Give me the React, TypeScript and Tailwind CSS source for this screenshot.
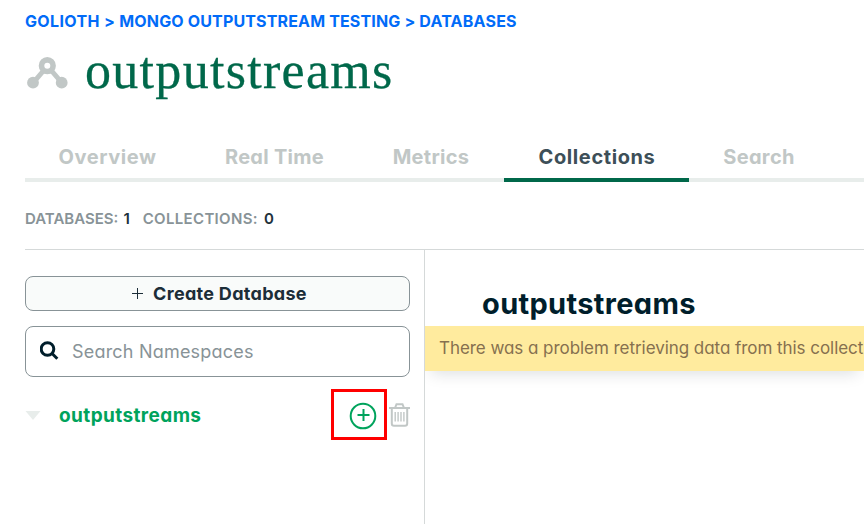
const tabs = [
  { label: "Overview", box: "w-[165px] text-[#c1c7c6]", text: "tracking-[0.55px]" },
  { label: "Real Time", box: "w-[168px] pl-px text-[#c1c7c6]", text: "tracking-[0.28px]" },
  { label: "Metrics", box: "w-[146px] text-[#c1c7c6]", text: "tracking-[0.3px]" },
  { label: "Collections", box: "w-[185px] border-b-4 border-[#00684a] pl-px text-[#3d4f58]", text: "tracking-[0.6px]" },
  { label: "Search", box: "w-[140px] text-[#c1c7c6]", text: "tracking-[0.35px]" },
];

function ClusterIcon() {
  return (
    <svg className="mt-[15px] h-[32px] w-[41px]" viewBox="0 0 41 32" fill="none">
      <path d="M6 26 20.500 9 35 26" stroke="#c1c7c6" strokeWidth="5" />
      <circle cx="6" cy="25.700" r="5.900" fill="#c1c7c6" />
      <circle cx="34.700" cy="25.700" r="5.900" fill="#c1c7c6" />
      <circle cx="20.300" cy="8.700" r="5.800" fill="white" stroke="#c1c7c6" strokeWidth="5.600" />
    </svg>
  );
}

export default function App() {
  return (
    <div className="h-[524px] w-[864px] overflow-hidden bg-white font-['Inter',sans-serif] [font-feature-settings:'cv11','ss03']">
      <nav className="h-[42px] pt-[11px] pl-[25px] text-[16px] leading-[20px] font-bold whitespace-nowrap text-[#016bf8]">
        <span className="tracking-[0.35px]">GOLIOTH &gt; </span>
        <span className="tracking-[0.15px]">MONGO OUTPUTSTREAM TESTING &gt; </span>
        <span className="tracking-[0.2px]">DATABASES</span>
      </nav>
      <div className="flex h-[94px] pl-[27px]">
        <ClusterIcon />
        <h1 className="-mt-px ml-[17px] h-[60px] font-['Liberation_Serif',serif] text-[52px] leading-[60px] tracking-[1.3px] text-[#00684a] [-webkit-text-stroke:0.3px_#00684a]">
          outputstreams
        </h1>
      </div>
      <div className="ml-[25px] flex h-[46px] border-b-4 border-[#e8edeb] text-[20px] leading-[42px] font-bold">
        {tabs.map((t) => (
          <div key={t.label} className={"h-[46px] shrink-0 text-center " + t.box}>
            <span className={t.text}>{t.label}</span>
          </div>
        ))}
      </div>
      <div className="ml-[25px] flex h-[68px] border-b border-[#d5d9d9] pt-[27px] text-[15px] leading-[20px] font-semibold text-[#889397]">
        <span>DATABASES:</span>
        <span className="ml-[5px] text-[#21313c]">1</span>
        <span className="ml-[13px] tracking-[0.33px]">COLLECTIONS:</span>
        <span className="ml-[6px] text-[#21313c]">0</span>
      </div>
      <div className="flex h-[274px]">
        <aside className="w-[425px] shrink-0 border-r border-[#d5d9d9] pt-[26px] pl-[25px]">
          <button className="flex h-[35px] w-[385px] items-center justify-center rounded-[8px] border border-[#889397] bg-[#f9fbfa] text-[18px] leading-[22px] font-bold text-[#1c2d38]">
            <svg className="mr-[9px] h-[11px] w-[11px]" viewBox="0 0 11 11" stroke="currentColor">
              <path d="M5.500 0V11M0 5.500H11" />
            </svg>
            <span className="mr-[-4px] ml-px tracking-[0.3px]">Create Database</span>
          </button>
          <div className="mt-[15px] flex h-[51px] w-[385px] items-center rounded-[8px] border border-[#889397] pl-[14px] text-[18px] text-[#889397]">
            <svg className="mb-[2px] h-[19px] w-[19px]" viewBox="0 0 19 19" fill="none" stroke="#001e2b" strokeWidth="3">
              <circle cx="7.500" cy="8" r="6.300" />
              <path d="M11.800 12.300 17.300 17.800" />
            </svg>
            <span className="ml-[13px] tracking-[0.2px]">Search Namespaces</span>
          </div>
          <div className="relative mt-[12px] flex h-[52px] items-center text-[19px] font-bold text-[#00a35c]">
            <svg className="h-[9px] w-[16px]" viewBox="0 0 16 9" fill="#e8edeb">
              <path d="M0.500 0H15.500L8 9Z" />
            </svg>
            <span className="mt-[2px] ml-[18px] tracking-[0.4px]">outputstreams</span>
            <svg className="mt-[2px] ml-auto h-[28px] w-[28px]" viewBox="0 0 28 28" fill="none" stroke="#00a35c" strokeWidth="2">
              <circle cx="14" cy="14" r="12.300" />
              <path d="M14.500 7V19M8.500 13H20.500" />
            </svg>
            <svg className="mr-[14px] ml-[12px] h-[24px] w-[21px]" viewBox="0 0 21 24" fill="none" stroke="#c1c7c6" strokeWidth="2">
              <path d="M0 5H21M6 5 7.500 1.200H13.500L15 5M2.800 5V20.500Q2.800 22.800 5 22.800H16Q18.200 22.800 18.200 20.500V5" />
              <path d="M6.200 9V18.500M9.100 9V18.500M12 9V18.500M14.900 9V18.500" strokeWidth="1.400" />
            </svg>
            <div className="absolute top-0 left-[306px] h-[51px] w-[56px] border-3 border-[#ff0000]" />
          </div>
        </aside>
        <main className="w-[439px] overflow-hidden">
          <h2 className="h-[76px] pt-[36px] pl-[57px] text-[29px] leading-[36px] font-bold tracking-[0.34px] text-[#001e2b]">
            outputstreams
          </h2>
          <div className="h-[45px] bg-[#ffeb9e] pl-[14px] text-[17px] leading-[45px] tracking-[-0.05px] whitespace-nowrap text-[#86704f] shadow-[0_8px_16px_-6px_rgba(0,30,43,0.15)]">
            There was a problem retrieving data from this collect
          </div>
        </main>
      </div>
    </div>
  );
}
